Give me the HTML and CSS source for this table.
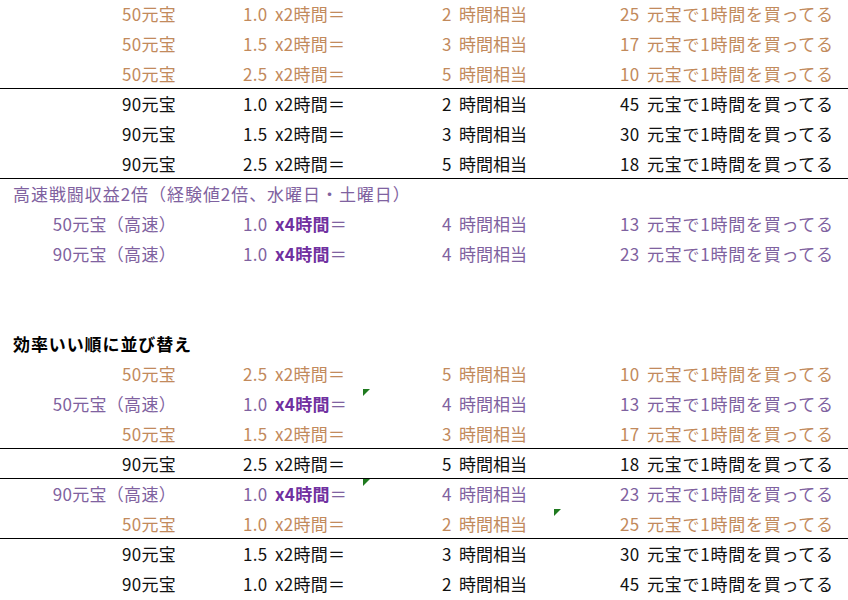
FILE: index.html
```html
<!DOCTYPE html>
<html lang="ja">
<head>
<meta charset="utf-8">
<link rel="stylesheet" href="styles.css">
</head>
<body>
<div class="sheet">
  <div class="row orange"><div class="c1">50元宝</div><div class="c2"><span class="n">1.0</span>x2時間＝</div><div class="c3"><span class="h">2</span>時間相当</div><div class="c4"><span class="y">25</span>元宝で1時間を買ってる</div></div>
  <div class="row orange"><div class="c1">50元宝</div><div class="c2"><span class="n">1.5</span>x2時間＝</div><div class="c3"><span class="h">3</span>時間相当</div><div class="c4"><span class="y">17</span>元宝で1時間を買ってる</div></div>
  <div class="row orange line"><div class="c1">50元宝</div><div class="c2"><span class="n">2.5</span>x2時間＝</div><div class="c3"><span class="h">5</span>時間相当</div><div class="c4"><span class="y">10</span>元宝で1時間を買ってる</div></div>
  <div class="row"><div class="c1">90元宝</div><div class="c2"><span class="n">1.0</span>x2時間＝</div><div class="c3"><span class="h">2</span>時間相当</div><div class="c4"><span class="y">45</span>元宝で1時間を買ってる</div></div>
  <div class="row"><div class="c1">90元宝</div><div class="c2"><span class="n">1.5</span>x2時間＝</div><div class="c3"><span class="h">3</span>時間相当</div><div class="c4"><span class="y">30</span>元宝で1時間を買ってる</div></div>
  <div class="row line"><div class="c1">90元宝</div><div class="c2"><span class="n">2.5</span>x2時間＝</div><div class="c3"><span class="h">5</span>時間相当</div><div class="c4"><span class="y">18</span>元宝で1時間を買ってる</div></div>
  <div class="row purple"><div class="title">高速戦闘収益2倍（経験値2倍、水曜日・土曜日）</div></div>
  <div class="row purple"><div class="c1">50元宝（高速）</div><div class="c2"><span class="n">1.0</span><b>x4時間</b>＝</div><div class="c3"><span class="h">4</span>時間相当</div><div class="c4"><span class="y">13</span>元宝で1時間を買ってる</div></div>
  <div class="row purple"><div class="c1">90元宝（高速）</div><div class="c2"><span class="n">1.0</span><b>x4時間</b>＝</div><div class="c3"><span class="h">4</span>時間相当</div><div class="c4"><span class="y">23</span>元宝で1時間を買ってる</div></div>
  <div class="row"></div>
  <div class="row"></div>
  <div class="row"><div class="title bold">効率いい順に並び替え</div></div>
  <div class="row orange"><div class="c1">50元宝</div><div class="c2"><span class="n">2.5</span>x2時間＝</div><div class="c3"><span class="h">5</span>時間相当</div><div class="c4"><span class="y">10</span>元宝で1時間を買ってる</div></div>
  <div class="row purple"><div class="c1">50元宝（高速）</div><div class="c2"><span class="n">1.0</span><b>x4時間</b>＝</div><div class="c3 flagged"><span class="h">4</span>時間相当</div><div class="c4"><span class="y">13</span>元宝で1時間を買ってる</div></div>
  <div class="row orange line"><div class="c1">50元宝</div><div class="c2"><span class="n">1.5</span>x2時間＝</div><div class="c3"><span class="h">3</span>時間相当</div><div class="c4"><span class="y">17</span>元宝で1時間を買ってる</div></div>
  <div class="row line"><div class="c1">90元宝</div><div class="c2"><span class="n">2.5</span>x2時間＝</div><div class="c3"><span class="h">5</span>時間相当</div><div class="c4"><span class="y">18</span>元宝で1時間を買ってる</div></div>
  <div class="row purple"><div class="c1">90元宝（高速）</div><div class="c2"><span class="n">1.0</span><b>x4時間</b>＝</div><div class="c3 flagged"><span class="h">4</span>時間相当</div><div class="c4"><span class="y">23</span>元宝で1時間を買ってる</div></div>
  <div class="row orange line"><div class="c1">50元宝</div><div class="c2"><span class="n">1.0</span>x2時間＝</div><div class="c3"><span class="h">2</span>時間相当</div><div class="c4 flagged"><span class="y">25</span>元宝で1時間を買ってる</div></div>
  <div class="row"><div class="c1">90元宝</div><div class="c2"><span class="n">1.5</span>x2時間＝</div><div class="c3"><span class="h">3</span>時間相当</div><div class="c4"><span class="y">30</span>元宝で1時間を買ってる</div></div>
  <div class="row"><div class="c1">90元宝</div><div class="c2"><span class="n">1.0</span>x2時間＝</div><div class="c3"><span class="h">2</span>時間相当</div><div class="c4"><span class="y">45</span>元宝で1時間を買ってる</div></div>
</div>
</body>
</html>
```

FILE: styles.css
```css
html, body {
  margin: 0;
  padding: 0;
  background: #ffffff;
}
body {
  font-family: "Noto Sans CJK JP", "Noto Sans", sans-serif;
  font-size: 17px;
  letter-spacing: 0.3px;
  color: #111111;
  overflow: hidden;
}
.sheet {
  width: 848px;
  margin-top: -1px;
}
.row {
  display: grid;
  grid-template-columns: 180px 182px 191px 1fr;
  height: 30px;
  line-height: 29px;
  box-sizing: border-box;
  white-space: nowrap;
}
.row.line {
  border-bottom: 1px solid #000000;
}
.orange { color: #c28a5c; }
.purple { color: #7f62a0; }
.purple b { color: #7030a0; font-weight: 700; }
.c1 {
  text-align: right;
  padding-right: 4px;
}
.c2 { padding-left: 63px; }
.c3 { padding-left: 80px; position: relative; letter-spacing: 0; }
.c4 { padding-left: 67px; position: relative; letter-spacing: 0.75px; }
.n { display: inline-block; width: 32px; }
.h { display: inline-block; width: 17px; }
.y { display: inline-block; width: 27px; letter-spacing: 0.3px; }
.title {
  grid-column: 1 / -1;
  padding-left: 13px;
  letter-spacing: 0.95px;
}
.title.bold {
  font-weight: 700;
  color: #000000;
  letter-spacing: 0.9px;
}
.flagged::before {
  content: "";
  position: absolute;
  left: 1px;
  top: 0;
  width: 0;
  height: 0;
  border-top: 7px solid #1f7a1f;
  border-right: 7px solid transparent;
}
```
